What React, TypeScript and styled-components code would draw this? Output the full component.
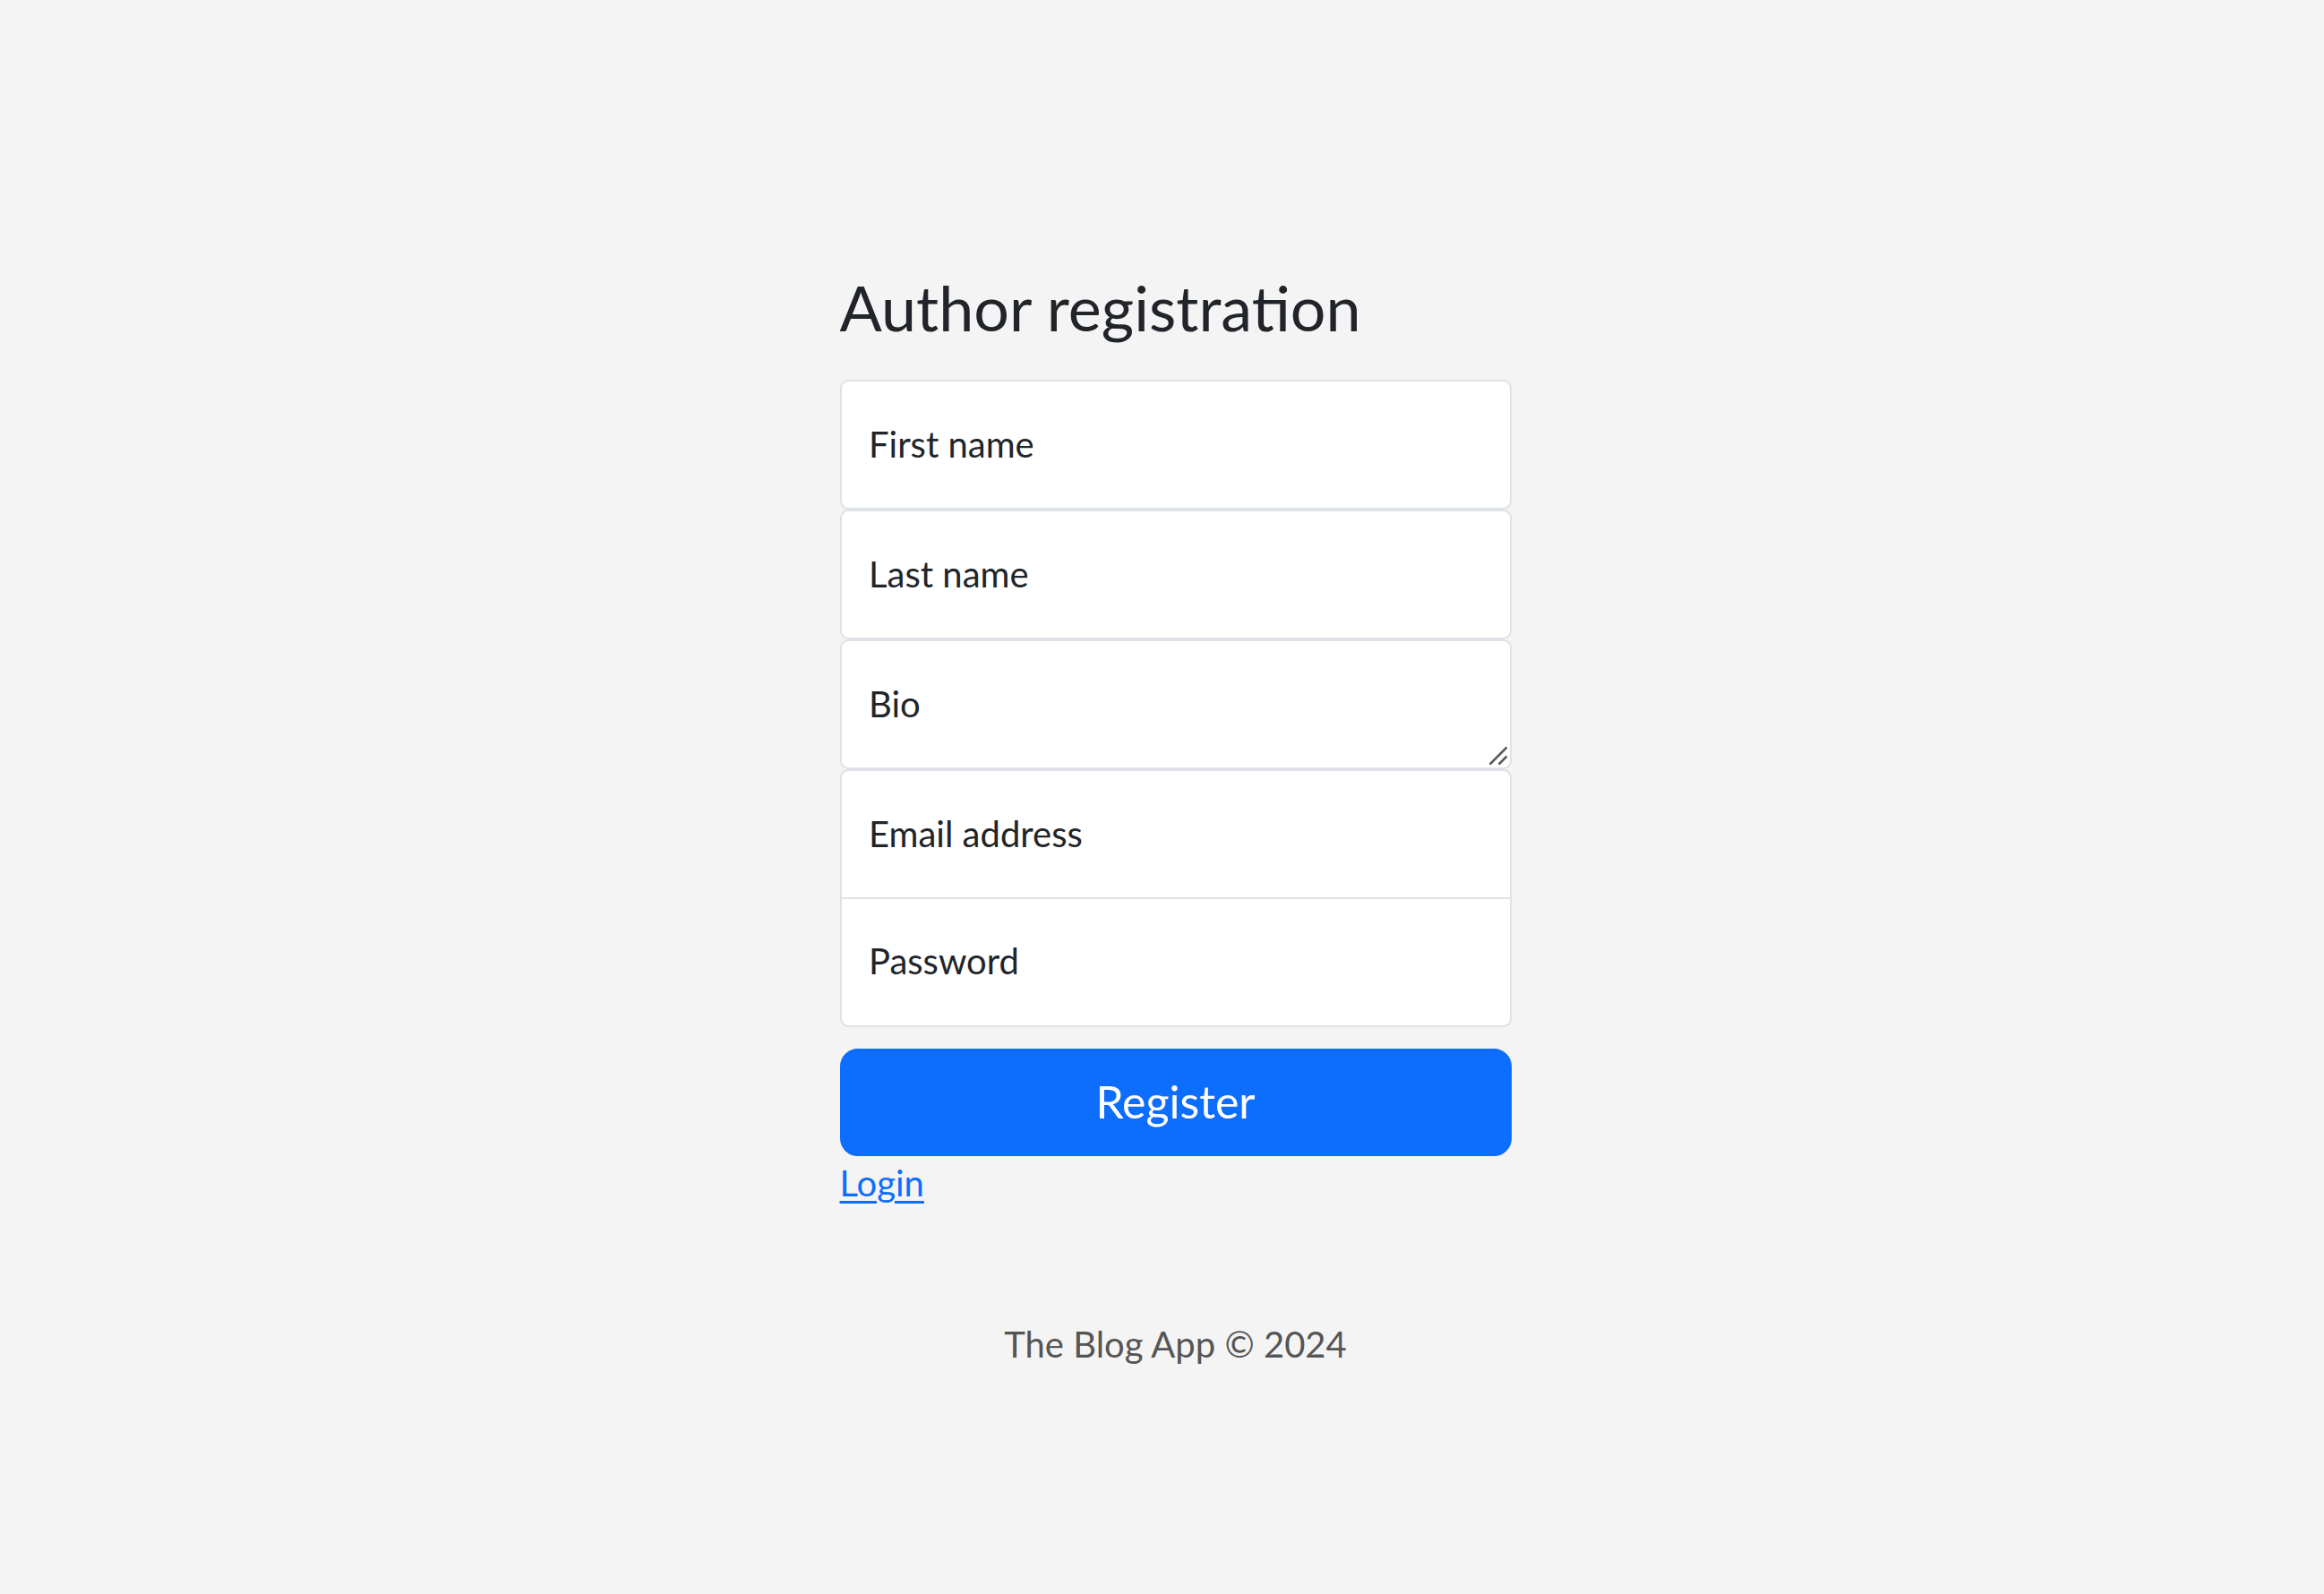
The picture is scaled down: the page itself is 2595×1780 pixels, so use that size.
import React from "react";
import styled, { createGlobalStyle } from "styled-components";

const GlobalStyle = createGlobalStyle`
  html, body {
    margin: 0;
    padding: 0;
    background: #f4f4f4;
    font-family: Lato, "Open Sans", "Noto Sans", sans-serif;
    color: #212529;
  }
  * { box-sizing: border-box; }
`;

const Page = styled.div`
  min-height: 1780px;
  display: flex;
  flex-direction: column;
  align-items: center;
  padding: 301px 0 0 30px;
`;

const Main = styled.main`
  width: 750px;
  display: flex;
  flex-direction: column;
`;

const Title = styled.h3`
  margin: 0 0 39px 0;
  font-size: 70px;
  line-height: 84px;
  font-weight: 400;
  color: #212529;
`;

const Form = styled.form`
  display: flex;
  flex-direction: column;
`;

const Field = styled.div<{ $join?: "top" | "bottom" }>`
  position: relative;
  margin-top: ${(p) => (p.$join === "bottom" ? "-2.5px" : "0")};
`;

const controlCss = `
  display: block;
  width: 100%;
  height: 145px;
  min-height: 145px;
  padding: 40px 30px;
  font-family: inherit;
  font-size: 40px;
  line-height: 60px;
  color: #212529;
  background: #ffffff;
  border: 2.5px solid #dee2e6;
  border-radius: 9.4px;
  outline: none;
  margin: 0;
`;

const Input = styled.input<{ $join?: "top" | "bottom" }>`
  ${controlCss}
  ${(p) =>
    p.$join === "top"
      ? "border-bottom-left-radius: 0; border-bottom-right-radius: 0;"
      : p.$join === "bottom"
      ? "border-top-left-radius: 0; border-top-right-radius: 0;"
      : ""}
`;

const TextArea = styled.textarea`
  ${controlCss}
  resize: none;
  overflow: hidden;
`;

const Grip = styled.svg`
  position: absolute;
  right: 4px;
  bottom: 4px;
  width: 22px;
  height: 23px;
  pointer-events: none;
`;

const Label = styled.label`
  position: absolute;
  top: 0;
  left: 0;
  padding: 41.5px 32.5px;
  font-size: 40px;
  line-height: 60px;
  color: #212529;
  pointer-events: none;
  white-space: nowrap;
`;

const Button = styled.button`
  margin-top: 24px;
  width: 100%;
  height: 120px;
  padding: 20px 40px;
  font-family: inherit;
  font-size: 50px;
  line-height: 75px;
  color: #ffffff;
  background: #0d6efd;
  border: 2.5px solid #0d6efd;
  border-radius: 20px;
  cursor: pointer;
`;

const LoginLink = styled.a`
  align-self: flex-start;
  font-size: 40px;
  line-height: 60px;
  color: #0d6efd;
  text-decoration: underline;
  text-decoration-thickness: 2.5px;
  text-underline-offset: 5px;
`;

const Footer = styled.footer`
  margin-top: 120px;
  font-size: 40px;
  line-height: 60px;
  color: #555555;
  text-align: center;
`;

type FieldDef = { id: string; label: string; multiline?: boolean };

const fields: FieldDef[] = [
  { id: "firstName", label: "First name" },
  { id: "lastName", label: "Last name" },
  { id: "bio", label: "Bio", multiline: true },
];

export default function App() {
  return (
    <>
      <GlobalStyle />
      <Page>
        <Main>
          <Title>Author registration</Title>
          <Form onSubmit={(e) => e.preventDefault()}>
            {fields.map((f) => (
              <Field key={f.id}>
                {f.multiline ? <TextArea id={f.id} /> : <Input id={f.id} type="text" />}
                <Label htmlFor={f.id}>{f.label}</Label>
                {f.multiline && (
                  <Grip viewBox="0 0 22 23">
                    <path
                      d="M1.5 21.5 L20.5 2.5 M11.5 21.5 L20.5 12.5"
                      stroke="#5a5a5a"
                      strokeWidth="2.5"
                      strokeLinecap="butt"
                      fill="none"
                    />
                  </Grip>
                )}
              </Field>
            ))}
            <Field>
              <Input id="email" type="email" $join="top" />
              <Label htmlFor="email">Email address</Label>
            </Field>
            <Field $join="bottom">
              <Input id="password" type="password" $join="bottom" />
              <Label htmlFor="password">Password</Label>
            </Field>
            <Button type="submit">Register</Button>
          </Form>
          <LoginLink href="#">Login</LoginLink>
        </Main>
        <Footer>The Blog App © 2024</Footer>
      </Page>
    </>
  );
}
